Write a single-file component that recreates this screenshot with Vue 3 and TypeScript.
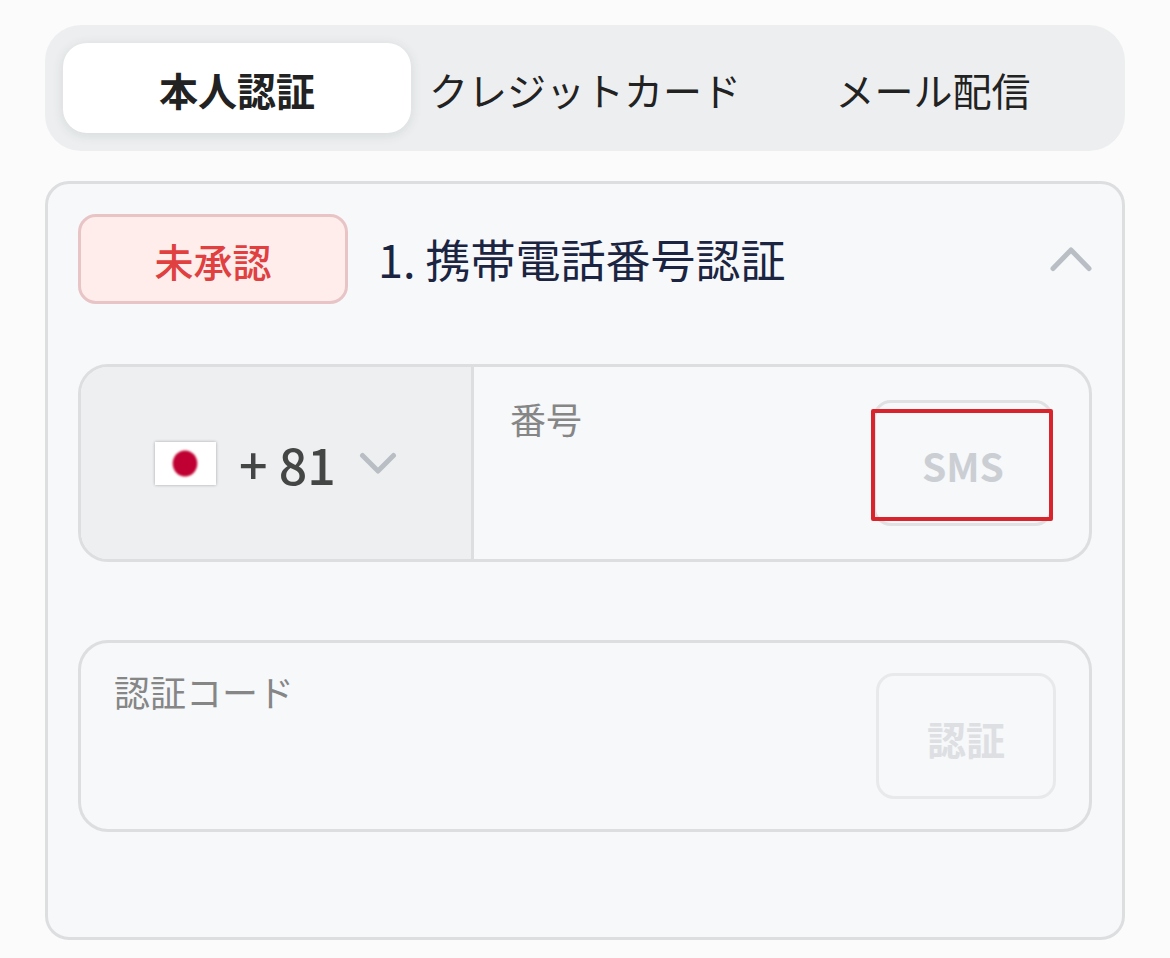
<script setup lang="ts">
import { ref } from 'vue'

interface Tab {
  id: string
  label: string
}

const tabs: Tab[] = [
  { id: 'identity', label: '本人認証' },
  { id: 'card', label: 'クレジットカード' },
  { id: 'mail', label: 'メール配信' },
]

const activeTab = ref<string>('identity')
const expanded = ref<boolean>(true)
const dialCode = ref<string>('81')
const phone = ref<string>('')
const code = ref<string>('')
</script>

<template>
  <main class="page">
    <nav class="tabs" role="tablist">
      <button
        v-for="tab in tabs"
        :key="tab.id"
        type="button"
        role="tab"
        class="tab"
        :class="{ active: tab.id === activeTab }"
        :aria-selected="tab.id === activeTab"
        @click="activeTab = tab.id"
      >
        {{ tab.label }}
      </button>
    </nav>

    <section class="card">
      <header class="card-head">
        <span class="badge">未承認</span>
        <h2 class="title">1. 携帯電話番号認証</h2>
        <button
          type="button"
          class="toggle"
          aria-label="開閉"
          :aria-expanded="expanded"
          @click="expanded = !expanded"
        >
          <svg width="42" height="28" viewBox="0 0 42 28" aria-hidden="true">
            <path d="M3 23.5 L21 5 L39 23.5" />
          </svg>
        </button>
      </header>

      <form v-if="expanded" class="fields" @submit.prevent>
        <div class="field phone">
          <div class="country">
            <svg class="flag" width="61" height="43" viewBox="0 0 61 43" aria-hidden="true">
              <defs>
                <filter id="soft" x="-20%" y="-20%" width="140%" height="140%">
                  <feGaussianBlur stdDeviation="1" />
                </filter>
              </defs>
              <rect width="61" height="43" fill="#fff" />
              <ellipse cx="30" cy="21.5" rx="12.3" ry="13" fill="#c00030" filter="url(#soft)" />
            </svg>
            <select v-model="dialCode" class="dial" aria-label="国番号">
              <option value="81">+ 81</option>
            </select>
            <svg class="arrow" width="38" height="24" viewBox="0 0 38 24" aria-hidden="true">
              <path d="M3.5 4.5 L19 20 L34.5 4.5" />
            </svg>
          </div>
          <div class="entry">
            <label for="phone">番号</label>
            <input id="phone" v-model="phone" type="tel" />
          </div>
          <div class="action marked">
            <button type="button" class="send" disabled>SMS</button>
          </div>
        </div>

        <div class="field code">
          <div class="entry">
            <label for="code">認証コード</label>
            <input id="code" v-model="code" type="text" inputmode="numeric" />
          </div>
          <div class="action">
            <button type="submit" class="send faint" disabled>認証</button>
          </div>
        </div>
      </form>
    </section>
  </main>
</template>

<style>
body {
  background: #fbfbfb;
}
</style>

<style scoped>
.page {
  padding: 25px 45px 18px;
  font-family: 'Noto Sans CJK JP', sans-serif;
  color: #222426;
}

button,
input,
select {
  font-family: inherit;
  margin: 0;
  border: 0;
  background: none;
  appearance: none;
}

.tabs {
  display: grid;
  grid-template-columns: repeat(3, minmax(0, 1fr));
  padding: 18px;
  border-radius: 36px;
  background: #eceeef;
}

.tab {
  height: 90px;
  padding: 2px 0 0;
  border-radius: 24px;
  font-size: 39px;
  line-height: 56px;
  color: #222222;
  white-space: nowrap;
}

.tab.active {
  background: #fff;
  font-weight: 700;
  box-shadow: 0 2px 12px rgba(60, 70, 80, 0.12);
}

.card {
  margin-top: 30px;
  padding: 30px 30px 105px;
  border: 3px solid #dcdee0;
  border-radius: 24px;
  background: #f6f8fa;
}

.card-head {
  display: flex;
  align-items: center;
}

.badge {
  box-sizing: border-box;
  width: 270px;
  height: 90px;
  padding-top: 1px;
  border: 3px solid #e8c4c6;
  border-radius: 18px;
  background: #ffedec;
  color: #e04040;
  font-size: 39px;
  font-weight: 500;
  line-height: 84px;
  text-align: center;
}

.title {
  flex: 1;
  margin: 0 0 0 30px;
  font-size: 45px;
  font-weight: 400;
  line-height: 66px;
  color: #1b2440;
}

.toggle {
  display: flex;
  padding: 0;
}

svg path {
  fill: none;
  stroke: #b9bec5;
  stroke-width: 5;
  stroke-linecap: round;
  stroke-linejoin: round;
}

.fields {
  display: grid;
  gap: 78px;
  margin-top: 60px;
}

.field {
  display: flex;
  overflow: hidden;
  border: 3px solid #dcdee0;
  border-radius: 30px;
}

.phone {
  height: 192px;
}

.code {
  height: 186px;
}

.country {
  flex: 0 0 39%;
  box-sizing: border-box;
  display: flex;
  align-items: center;
  justify-content: center;
  gap: 23px;
  border-right: 3px solid #dcdee0;
  background: #eeeff1;
}

.flag {
  box-shadow: 0 0 3px rgba(0, 0, 0, 0.3);
}

.dial {
  padding: 0;
  font-size: 50px;
  font-weight: 500;
  line-height: 74px;
  color: #444645;
}

.entry {
  flex: 1;
  min-width: 0;
  display: flex;
  flex-direction: column;
  padding: 25px 0 24px 36px;
}

.code .entry {
  padding-top: 22px;
  padding-left: 33px;
}

label {
  font-size: 36px;
  line-height: 52px;
  color: #868686;
}

input {
  flex: 1;
  min-height: 0;
  width: 100%;
  padding: 0;
  font-size: 39px;
  outline: 0;
}

.action {
  position: relative;
  align-self: center;
  margin-right: 36px;
}

.code .action {
  margin-right: 33px;
}

.send {
  display: block;
  width: 180px;
  height: 126px;
  padding: 3px 0 0;
  border: 3px solid #dfe1e2;
  border-radius: 18px;
  font-size: 39px;
  font-weight: 700;
  line-height: 56px;
  color: #cbcfd4;
}

.send.faint {
  border-color: #e8e9eb;
  color: #dddfe3;
}

.marked::after {
  content: '';
  position: absolute;
  inset: 9px 0 5px -2px;
  border: 4px solid #d9242c;
  border-radius: 2px;
  pointer-events: none;
}
</style>
